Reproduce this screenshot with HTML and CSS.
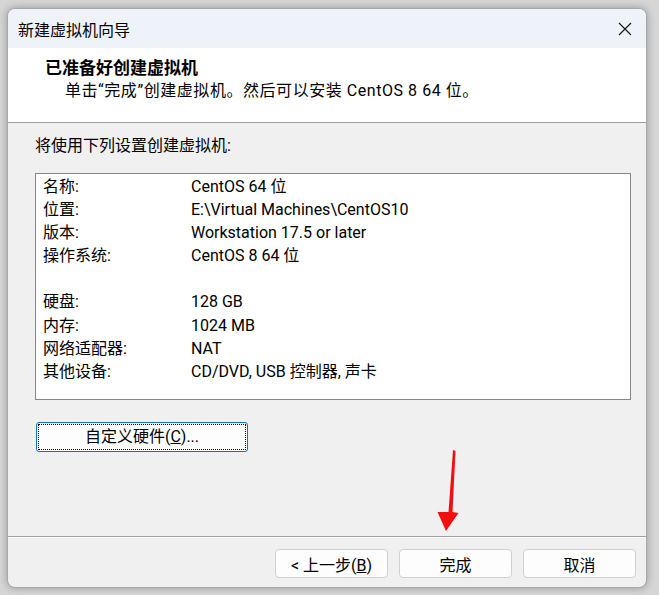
FILE: index.html
```html
<!DOCTYPE html>
<html lang="zh-CN">
<head>
    <meta charset="UTF-8">
    <title>新建虚拟机向导</title>
    <link rel="stylesheet" href="styles.css">
</head>
<body>
    <div class="window">
        <div class="titlebar">
            <span class="title">新建虚拟机向导</span>
            <span class="close">
                <svg width="14" height="14" viewBox="0 0 14 14"><path d="M1 1 L13 13 M13 1 L1 13" stroke="#1a1a1a" stroke-width="1.2" fill="none"/></svg>
            </span>
        </div>
        <div class="header">
            <div class="heading">已准备好创建虚拟机</div>
            <div class="subheading">单击“完成”创建虚拟机。然后可以安装 CentOS 8 64 位。</div>
        </div>
        <div class="content">
            <p class="intro">将使用下列设置创建虚拟机:</p>
            <div class="listbox">
                <div class="row"><span class="key">名称:</span><span>CentOS 64 位</span></div>
                <div class="row"><span class="key">位置:</span><span>E:\Virtual Machines\CentOS10</span></div>
                <div class="row"><span class="key">版本:</span><span>Workstation 17.5 or later</span></div>
                <div class="row"><span class="key">操作系统:</span><span>CentOS 8 64 位</span></div>
                <div class="row"></div>
                <div class="row"><span class="key">硬盘:</span><span>128 GB</span></div>
                <div class="row"><span class="key">内存:</span><span>1024 MB</span></div>
                <div class="row"><span class="key">网络适配器:</span><span>NAT</span></div>
                <div class="row"><span class="key">其他设备:</span><span>CD/DVD, USB 控制器, 声卡</span></div>
            </div>
            <button type="button" class="btn custom"><span class="focus">自定义硬件(<u>C</u>)...</span></button>
        </div>
        <div class="footer">
            <button type="button" class="btn">&lt; 上一步(<u>B</u>)</button>
            <button type="button" class="btn">完成</button>
            <button type="button" class="btn">取消</button>
        </div>
    </div>

    <svg class="arrow" width="40" height="90" viewBox="428 446 40 90">
        <polygon points="453,450 455.5,451 452.5,512 458.5,513 446,531 437.5,512 448.5,512" fill="#f01010"/>
    </svg>
</body>
</html>
```

FILE: styles.css
```css
body {
    margin: 0;
    width: 659px;
    height: 595px;
    background-color: #d6d6d6;
    font-family: Roboto, "Noto Sans CJK SC", sans-serif;
    font-size: 16px;
    color: #000;
    overflow: hidden;
    position: relative;
}

.window {
    position: relative;
    margin: 8px 0 0 7px;
    width: 640px;
    height: 580px;
    box-sizing: border-box;
    border: 1px solid #a8a8a8;
    border-radius: 8px;
    background-color: #f0f0f0;
    box-shadow: 0 0 8px rgba(0, 0, 0, 0.3);
    overflow: hidden;
    display: flex;
    flex-direction: column;
}

.titlebar {
    height: 39px;
    background-color: #eef3f9;
    display: flex;
    align-items: center;
    justify-content: space-between;
    padding: 0 14px 0 10px;
}

.title {
    font-size: 16px;
}

.close {
    display: flex;
    padding-top: 1px;
}

.header {
    background-color: #fff;
    height: 75px;
    padding: 9px 0 0 37px;
    box-sizing: border-box;
    border-bottom: 1px solid #a0a0a0;
}

.heading {
    font-weight: bold;
    font-size: 17px;
    line-height: 22px;
}

.subheading {
    padding-left: 20px;
    line-height: 23px;
    letter-spacing: 0.55px;
}

.content {
    flex: 1;
    padding: 0 15px 0 27px;
}

.intro {
    margin: 12px 0 0 0;
    line-height: 22px;
}

.listbox {
    margin-top: 16px;
    height: 227px;
    box-sizing: border-box;
    border: 1px solid #828790;
    background-color: #fff;
    padding: 1px 0 0 7px;
}

.row {
    display: flex;
    height: 23.1px;
    line-height: 24px;
}

.key {
    width: 148px;
}

.btn {
    font-family: inherit;
    font-size: 16px;
    color: #000;
    background-color: #fdfdfd;
    border: 1px solid #d0d0d0;
    border-radius: 4px;
    height: 29px;
    width: 113px;
    padding: 0;
}

.custom {
    margin-top: 22px;
    margin-left: 1px;
    width: 212px;
    height: 30px;
    border: 1px solid #0f6fd0;
    border-radius: 3px;
    padding: 1px;
}

.focus {
    display: block;
    height: 100%;
    box-sizing: border-box;
    border: 1px dotted #000;
    line-height: 24px;
}

.footer {
    height: 51px;
    border-top: 1px solid #a0a0a0;
    box-shadow: inset 0 1px 0 #fff;
    display: flex;
    justify-content: flex-end;
    gap: 11px;
    padding: 12px 10px 0 0;
    box-sizing: border-box;
}

.arrow {
    position: absolute;
    left: 428px;
    top: 446px;
}
```
